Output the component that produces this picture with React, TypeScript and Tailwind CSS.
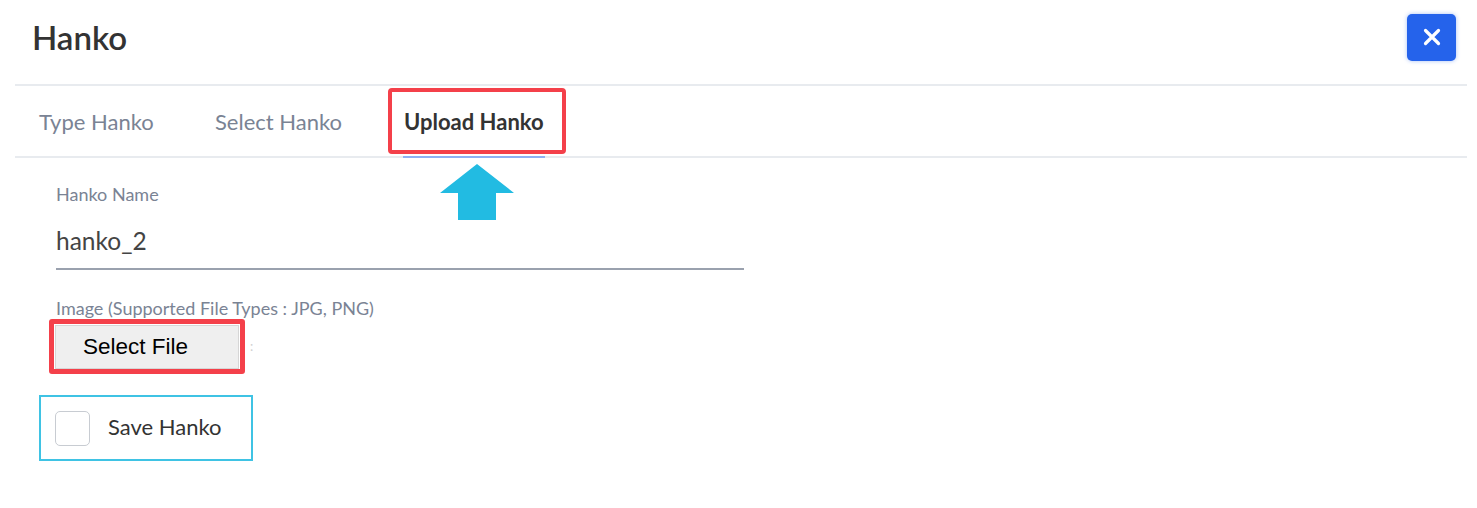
import React from "react";

export default function App() {
  return (
    <div className="w-[1477px] h-[508px] bg-white relative overflow-hidden" style={{ fontFamily: "Lato, 'Noto Sans', sans-serif" }}>
      <div className="flex items-center justify-between pl-[32px] pr-[21px] h-[84px]">
        <h1 className="text-[33px] font-semibold text-[#333] leading-none pb-[10px]">Hanko</h1>
        <button className="w-[49px] h-[47px] rounded-[5px] bg-[#2563eb] flex items-center justify-center mb-[10px] shadow-[0_0_4px_rgba(37,99,235,0.4)]">
          <svg width="18" height="18" viewBox="0 0 18 18" stroke="white" strokeWidth="3.2" strokeLinecap="round">
            <path d="M2.5 2.5 L15.5 15.5 M15.5 2.5 L2.5 15.5" />
          </svg>
        </button>
      </div>
      <div className="mx-[15px] mr-[10px] h-[2px] bg-[#e8ebef]" />
      <div className="ml-[15px] mr-[10px] h-[72px] flex items-center border-b-2 border-[#e8ebef] relative">
        <span className="ml-[24px] w-[176px] text-[22px] text-[#7a8394]">Type Hanko</span>
        <span className="w-[173px] text-[22px] text-[#7a8394]">Select Hanko</span>
        <div className="w-[178px] h-[66px] border-[4px] border-[#f4404a] rounded-[4px] flex items-center pl-[12px]">
          <span className="text-[22px] font-bold text-[#333]">Upload Hanko</span>
        </div>
        <div className="absolute left-[388px] -bottom-[2px] w-[142px] h-[2px] bg-[#8fb0f3]" />
      </div>
      <div className="absolute left-[440px] top-[164px]">
        <svg width="74" height="56" viewBox="0 0 74 56">
          <path d="M37 0 L74 29 L56 29 L56 56 L18 56 L18 29 L0 29 Z" fill="#22bbe2" />
        </svg>
      </div>
      <div className="pl-[56px] pt-[25px] flex flex-col">
        <span className="text-[18px] text-[#7a8394] leading-[22px]">Hanko Name</span>
        <div className="w-[688px] h-[65px] pt-[10px] border-b-2 border-[#9aa1ae] flex items-center">
          <span className="text-[24.5px] text-[#444] leading-none">hanko_2</span>
        </div>
        <span className="mt-[27px] text-[18px] text-[#7a8394] leading-[22px]">Image (Supported File Types : JPG, PNG)</span>
        <div className="flex items-center mt-[0px] -ml-[7px]">
          <div className="w-[196px] h-[55px] border-[5px] border-[#f4404a] rounded-[3px] flex items-center justify-center">
            <div className="w-[184px] h-[44px] pt-[2px] bg-[#efefef] border border-[#d6d6d6] flex items-center pl-[27px]" style={{ fontFamily: "'Liberation Sans', Arial, sans-serif" }}>
              <span className="text-[22.5px] text-black leading-none">Select File</span>
            </div>
          </div>
          <span className="ml-[5px] text-[13px] text-[#d0d0d0] leading-none">:</span>
        </div>
        <div className="mt-[21px] -ml-[17px] w-[214px] h-[66px] border-2 border-[#3fc3e4] flex items-center pl-[14px]">
          <div className="w-[35px] h-[35px] rounded-[5px] border border-[#c8ccd2]" />
          <span className="ml-[18px] pb-[4px] text-[22px] text-[#333]">Save Hanko</span>
        </div>
      </div>
    </div>
  );
}
